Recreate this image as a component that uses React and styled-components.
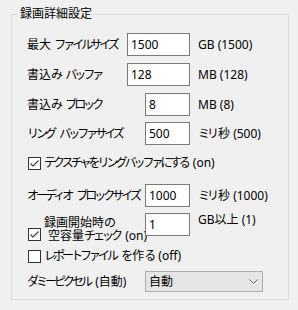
import React from "react";
import styled, { createGlobalStyle } from "styled-components";

const Global = createGlobalStyle`
  html, body { margin: 0; padding: 0; background: #f0f0f0; }
  body {
    font-family: "Noto Sans", "Noto Sans CJK JP", sans-serif;
    font-size: 12px;
    color: #000;
  }
`;

const Group = styled.section`
  position: relative;
  box-sizing: border-box;
  margin: 14px 0 0 11px;
  width: 278px;
  height: 286px;
  border: 1px solid #dcdcdc;
  padding: 18px 0 0 15px;
`;

const Legend = styled.div`
  position: absolute;
  top: -8px;
  left: 5px;
  padding: 0 3px;
  background: #f0f0f0;
  line-height: 14px;
  font-size: 12px;
`;

const Row = styled.div`
  display: flex;
  align-items: ${(p) => p.$align || "center"};
  height: ${(p) => p.$h}px;
  margin-top: ${(p) => p.$mt || 0}px;
`;

const Kana = styled.span`
  letter-spacing: -3px;
  margin-right: 2px;
`;

// kana in the reference UI font are narrow; tighten only kana runs
const T = ({ children }) =>
  String(children)
    .split(/([\u3040-\u30ff]+)/)
    .map((part, i) =>
      /[\u3040-\u30ff]/.test(part) ? <Kana key={i}>{part}</Kana> : <React.Fragment key={i}>{part}</React.Fragment>
    );

const Label = styled.span`
  width: ${(p) => p.$w}px;
  flex: none;
  white-space: nowrap;
  line-height: 14px;
`;

const Field = styled.div`
  box-sizing: border-box;
  width: ${(p) => p.$w}px;
  height: 23px;
  flex: none;
  background: #fff;
  border: 1px solid #7a7a7a;
  padding: 0 0 0 3px;
  display: flex;
  align-items: center;
  line-height: 14px;
`;

const Unit = styled.span`
  margin-left: 8px;
  white-space: nowrap;
  line-height: 14px;
`;

const Box = styled.span`
  box-sizing: border-box;
  width: 13px;
  height: 13px;
  flex: none;
  background: #fff;
  border: 1px solid #333;
  display: inline-flex;
  margin: ${(p) => p.$m || "0 3px 0 1px"};
`;

const Check = ({ on, m }) => (
  <Box $m={m}>
    {on && (
      <svg width="11" height="11" viewBox="0 0 11 11">
        <polyline points="1.5,5.5 4,8 9.5,2.5" fill="none" stroke="#3a3a3a" strokeWidth="1.1" />
      </svg>
    )}
  </Box>
);

const CheckText = styled.span`
  white-space: nowrap;
  line-height: 14px;
`;

const TwoLine = styled.div`
  display: flex;
  align-items: flex-start;
  width: 118px;
  flex: none;
`;

const Lines = styled.div`
  margin-top: 3px;
  line-height: 14px;
  white-space: nowrap;
`;

const Indent = styled.div`
  padding-left: 4px;
  margin-top: -1px;
`;

const Select = styled.div`
  box-sizing: border-box;
  width: 118px;
  height: 21px;
  background: #e5e5e5;
  border: 1px solid #adadad;
  display: flex;
  align-items: center;
  justify-content: space-between;
  padding: 0 4px 0 3px;
  line-height: 14px;
`;

const rows = [
  { label: "最大 ファイルサイズ", lw: 100, fw: 63, val: "1500", unit: "GB (1500)", mt: 0 },
  { label: "書込み バッファ", lw: 100, fw: 63, val: "128", unit: "MB (128)", mt: 7 },
  { label: "書込み ブロック", lw: 118, fw: 45, val: "8", unit: "MB (8)", mt: 7 },
  { label: "リング バッファサイズ", lw: 118, fw: 45, val: "500", unit: "ミリ秒 (500)", mt: 6 },
];

export default function App() {
  return (
    <>
      <Global />
      <Group>
        <Legend>録画詳細設定</Legend>
        {rows.map((r) => (
          <Row key={r.label} $h={23} $mt={r.mt}>
            <Label $w={r.lw}><T>{r.label}</T></Label>
            <Field $w={r.fw}>{r.val}</Field>
            <Unit><T>{r.unit}</T></Unit>
          </Row>
        ))}
        <Row $h={22} $mt={7}>
          <Check on />
          <CheckText><T>テクスチャをリングバッファにする (on)</T></CheckText>
        </Row>
        <Row $h={23} $mt={10}>
          <Label $w={118}><T>オーディオ ブロックサイズ</T></Label>
          <Field $w={45}>1000</Field>
          <Unit><T>ミリ秒 (1000)</T></Unit>
        </Row>
        <Row $h={30} $mt={6} $align="flex-start">
          <TwoLine>
            <Check on m="15px 3px 0 1px" />
            <Lines>
              <div><T>録画開始時の</T></div>
              <Indent><T>空容量チェック (on)</T></Indent>
            </Lines>
          </TwoLine>
          <Field $w={45}>1</Field>
          <Unit>GB以上 (1)</Unit>
        </Row>
        <Row $h={20} $mt={3}>
          <Check />
          <CheckText><T>レポートファイル を作る (off)</T></CheckText>
        </Row>
        <Row $h={21} $mt={5}>
          <Label $w={118}><T>ダミーピクセル (自動)</T></Label>
          <Select>
            <span>自動</span>
            <svg width="9" height="5" viewBox="0 0 9 5">
              <polyline points="0.5,0.5 4.5,4.5 8.5,0.5" fill="none" stroke="#606060" strokeWidth="1" />
            </svg>
          </Select>
        </Row>
      </Group>
    </>
  );
}
